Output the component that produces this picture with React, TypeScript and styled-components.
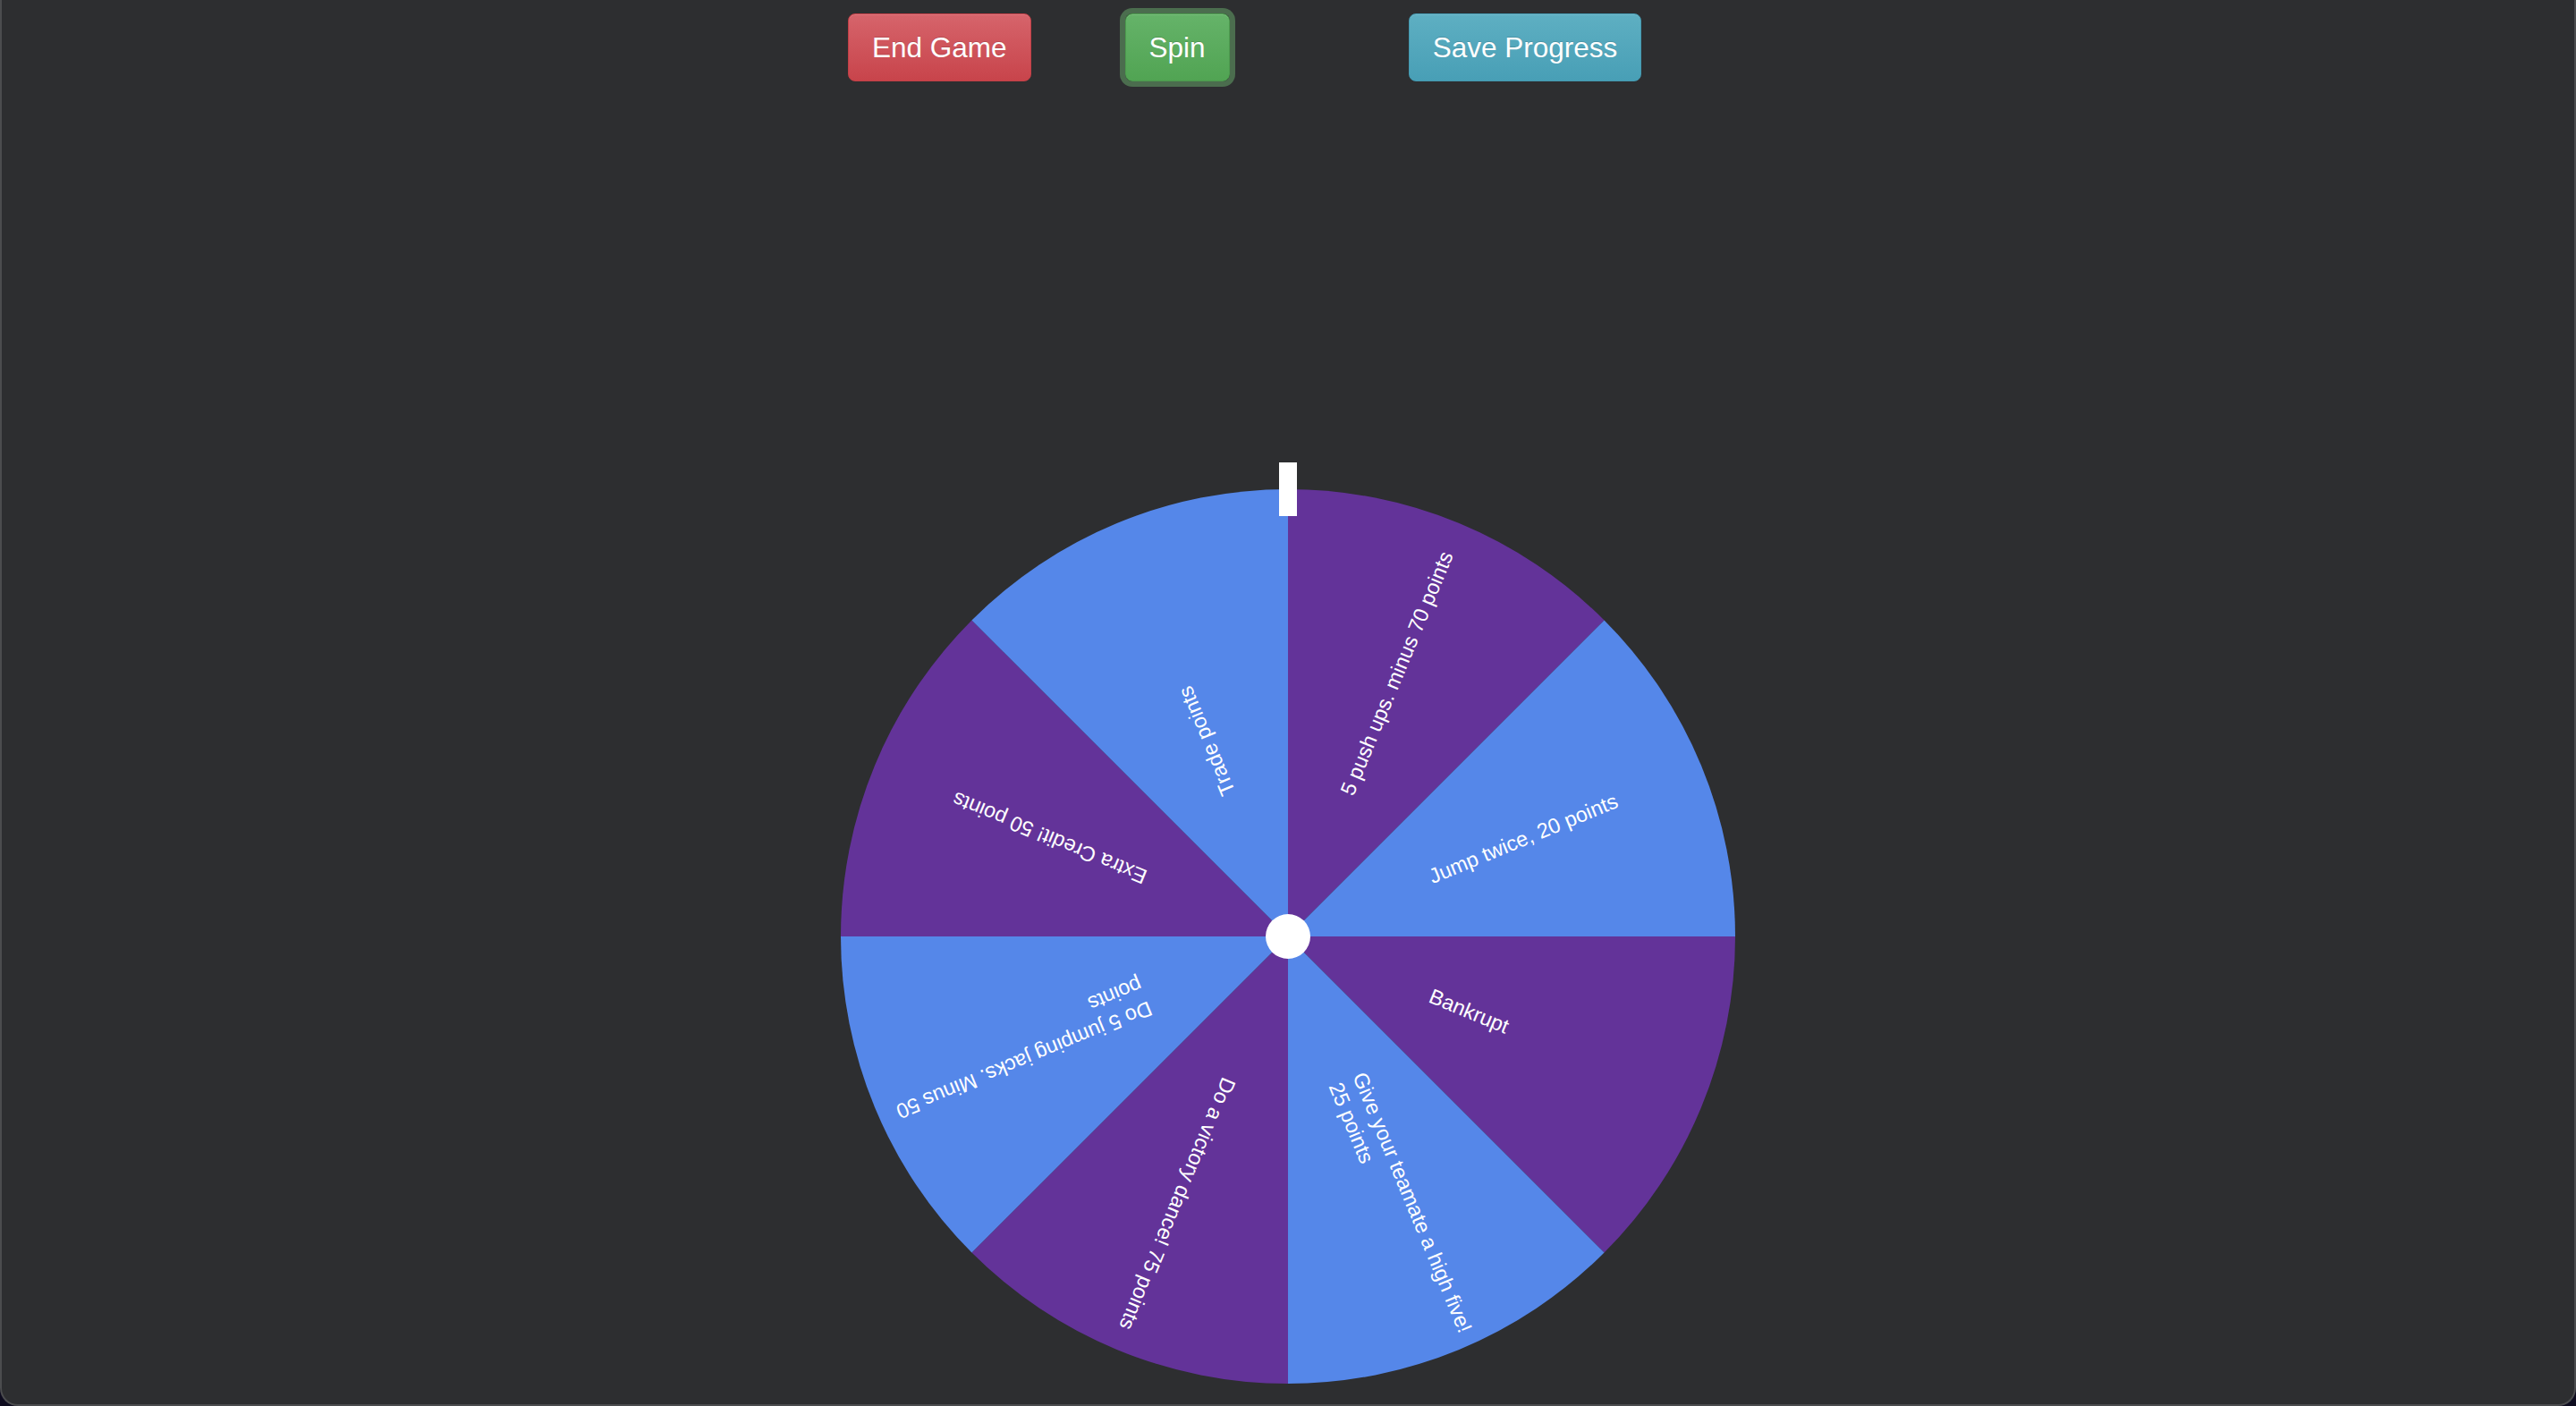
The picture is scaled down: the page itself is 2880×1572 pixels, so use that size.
import styled, { createGlobalStyle } from 'styled-components';

const GlobalStyle = createGlobalStyle`
  html,
  body {
    margin: 0;
    padding: 0;
    background: #0e0c1f;
  }

  body {
    font-family: 'Liberation Sans', Arial, sans-serif;
  }
`;

const Page = styled.div`
  box-sizing: border-box;
  display: flex;
  flex-direction: column;

  width: 100%;
  height: 100vh;

  background: #2d2e30;
  border: 2px solid #4b4c4e;
  border-top: none;
  border-radius: 0 0 20px 20px;

  overflow: hidden;
`;

const Toolbar = styled.div`
  display: flex;
  align-items: center;

  padding: 15px 0 0 946px;
`;

type Tone = 'danger' | 'success' | 'info';

const tones: Record<Tone, { top: string; bottom: string; border: string }> = {
  danger: { top: '#d6646b', bottom: '#c8444b', border: '#c23f46' },
  success: { top: '#65b369', bottom: '#51a453', border: '#4b9b4d' },
  info: { top: '#5eafc2', bottom: '#489fb6', border: '#4499b0' },
};

const Button = styled.button<{ $tone: Tone; $focused?: boolean; $gap?: number }>`
  box-sizing: border-box;
  display: inline-flex;
  align-items: center;
  justify-content: center;

  height: 76px;
  margin-left: ${({ $gap }) => $gap ?? 0}px;
  padding: 0 26px;

  font-family: 'Liberation Sans', Arial, sans-serif;
  font-size: 31.5px;
  color: #fff;
  text-shadow: 0 -1px 0 rgba(0, 0, 0, 0.15);

  background: linear-gradient(
    ${({ $tone }) => tones[$tone].top},
    ${({ $tone }) => tones[$tone].bottom}
  );
  border: 1px solid ${({ $tone }) => tones[$tone].border};
  border-radius: 8px;
  box-shadow: inset 0 1px 0 rgba(255, 255, 255, 0.12)
    ${({ $focused }) => ($focused ? ', 0 0 0 6px #4b6d4e' : '')};

  cursor: pointer;
`;

const Stage = styled.div`
  display: flex;
  justify-content: center;

  margin-top: 456px;
`;

const Wheel = styled.div`
  position: relative;

  width: 1000px;
  height: 1000px;
`;

const Disc = styled.svg`
  display: block;
  width: 100%;
  height: 100%;
`;

const Label = styled.div`
  position: absolute;
  top: 50%;
  left: 50%;

  width: 328px;

  font-family: 'Liberation Sans', Arial, sans-serif;
  font-size: 23.5px;
  line-height: 1.22;
  color: #fff;
  text-align: left;

  transform-origin: 0 0;
  pointer-events: none;
`;

const Hub = styled.div`
  position: absolute;
  top: 475px;
  left: 475px;

  width: 50px;
  height: 50px;

  background: #fff;
  border-radius: 50%;
`;

const Pointer = styled.div`
  position: absolute;
  top: -30px;
  left: 490px;

  width: 20px;
  height: 60px;

  background: #fff;
`;

const SEGMENTS = [
  '5 push ups. minus 70 points',
  'Jump twice, 20 points',
  'Bankrupt',
  'Give your teamate a high five! 25 points',
  'Do a victory dance! 75 points',
  'Do 5 jumping jacks. Minus 50 points',
  'Extra Credit! 50 points',
  'Trade points',
];

const PURPLE = '#633399';
const BLUE = '#5587e9';
const R = 500;

const point = (deg: number) => {
  const rad = (deg * Math.PI) / 180;
  return `${R + R * Math.sin(rad)} ${R - R * Math.cos(rad)}`;
};

const App = () => {
  const step = 360 / SEGMENTS.length;

  return (
    <>
      <GlobalStyle />
      <Page>
        <Toolbar>
          <Button $tone="danger">End Game</Button>
          <Button $tone="success" $focused $gap={105}>
            Spin
          </Button>
          <Button $tone="info" $gap={200}>
            Save Progress
          </Button>
        </Toolbar>

        <Stage>
          <Wheel>
            <Disc viewBox="0 0 1000 1000">
              {SEGMENTS.map((text, i) => (
                <path
                  key={text}
                  d={`M500 500 L${point(i * step)} A500 500 0 0 1 ${point((i + 1) * step)} Z`}
                  fill={i % 2 === 0 ? PURPLE : BLUE}
                />
              ))}
            </Disc>

            {SEGMENTS.map((text, i) => (
              <Label
                key={text}
                style={{
                  transform: `rotate(${i * step + step / 2 - 90}deg) translate(172px, -50%)`,
                }}
              >
                {text}
              </Label>
            ))}

            <Hub />
            <Pointer />
          </Wheel>
        </Stage>
      </Page>
    </>
  );
};

export default App;
